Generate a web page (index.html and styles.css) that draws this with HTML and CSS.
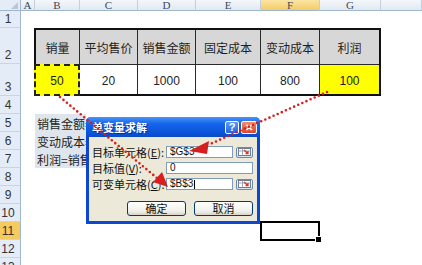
FILE: index.html
```html
<!DOCTYPE html>
<html lang="zh">
<head>
    <meta charset="UTF-8">
    <title>单变量求解</title>
    <link rel="stylesheet" href="styles.css">
</head>
<body>
    <div class="sheet">
        <div class="corner"><span class="tri"></span></div>
        <div class="col-head">A</div>
        <div class="col-head">B</div>
        <div class="col-head">C</div>
        <div class="col-head">D</div>
        <div class="col-head">E</div>
        <div class="col-head active">F</div>
        <div class="col-head">G</div>
        <div class="col-head"></div>

        <div class="row-head">1</div>
        <div class="row-head">2</div>
        <div class="row-head">3</div>
        <div class="row-head">4</div>
        <div class="row-head">5</div>
        <div class="row-head">6</div>
        <div class="row-head">7</div>
        <div class="row-head">8</div>
        <div class="row-head">9</div>
        <div class="row-head">10</div>
        <div class="row-head active">11</div>
        <div class="row-head">12</div>
        <div class="row-head">13</div>

        <div class="data">
            <div class="th">销量</div>
            <div class="th">平均售价</div>
            <div class="th">销售金额</div>
            <div class="th">固定成本</div>
            <div class="th">变动成本</div>
            <div class="th last">利润</div>
            <div class="td yellow ants">50</div>
            <div class="td">20</div>
            <div class="td">1000</div>
            <div class="td">100</div>
            <div class="td">800</div>
            <div class="td yellow last">100</div>
        </div>

        <!-- the rest of these lines sits under the dialog -->
        <div class="note">
            <div class="note-line">销售金额=销量*平均售价</div>
            <div class="note-line">变动成本=销量*16</div>
            <div class="note-line">利润=销售金额-成本</div>
        </div>

        <div class="picked"></div>
    </div>

    <div class="dialog">
        <div class="dlg-title">
            <span class="dlg-name">单变量求解</span>
            <span class="tb help">?</span>
            <span class="tb close">✕</span>
        </div>
        <div class="dlg-body">
            <div class="field">
                <label>目标单元格(<u>E</u>):</label>
                <span class="input short">$G$3</span>
                <span class="ref">
                    <svg width="13" height="8" viewBox="0 0 13 8">
                        <rect x="0.5" y="0.5" width="12" height="7" fill="#fff" stroke="#6b7d94"/>
                        <line x1="0.5" y1="3" x2="12.5" y2="3" stroke="#9aa8b8"/>
                        <line x1="4.5" y1="0.5" x2="4.5" y2="7.5" stroke="#9aa8b8"/>
                        <path d="M6 2 L10 5.5 M10 3 L10 5.5 L7.5 5.5" stroke="#d23a2a" stroke-width="1.3" fill="none"/>
                    </svg>
                </span>
            </div>
            <div class="field">
                <label>目标值(<u>V</u>):</label>
                <span class="input long">0</span>
            </div>
            <div class="field">
                <label>可变单元格(<u>C</u>):</label>
                <span class="input short">$B$3<span class="caret"></span></span>
                <span class="ref">
                    <svg width="13" height="8" viewBox="0 0 13 8">
                        <rect x="0.5" y="0.5" width="12" height="7" fill="#fff" stroke="#6b7d94"/>
                        <line x1="0.5" y1="3" x2="12.5" y2="3" stroke="#9aa8b8"/>
                        <line x1="4.5" y1="0.5" x2="4.5" y2="7.5" stroke="#9aa8b8"/>
                        <path d="M6 2 L10 5.5 M10 3 L10 5.5 L7.5 5.5" stroke="#d23a2a" stroke-width="1.3" fill="none"/>
                    </svg>
                </span>
            </div>
            <div class="actions">
                <button>确定</button>
                <button>取消</button>
            </div>
        </div>
    </div>

    <!-- red dotted pointers drawn over the sheet and dialog -->
    <svg class="pointers" width="422" height="265" viewBox="0 0 422 265">
        <line x1="60" y1="97" x2="157" y2="178" class="dots"/>
        <polygon points="168,187 153,182 162,172" fill="#d61f1f"/>
        <line x1="327" y1="92" x2="208" y2="145" class="dots"/>
        <polygon points="189,151 209,141 207,154" fill="#d61f1f"/>
    </svg>
</body>
</html>
```

FILE: styles.css
```css
body {
    margin: 0;
    width: 422px;
    height: 265px;
    overflow: hidden;
    position: relative;
    background: #fff;
    font-family: "Liberation Sans", "Noto Sans CJK SC", sans-serif;
    color: #222;
}
.sheet {
    display: grid;
    grid-template-columns: 21px 14px 45px 58px 58px 65px 59px 61px 1fr;
    grid-template-rows: 11px 17px 36px 32px repeat(10, 18px);
}
.corner {
    background: #e4ecf7;
    border-right: 1px solid #9eb6ce;
    border-bottom: 1px solid #9eb6ce;
    position: relative;
}
.tri {
    position: absolute;
    right: 2px;
    bottom: 1px;
    border-left: 7px solid transparent;
    border-bottom: 7px solid #b8c6d6;
}
.col-head {
    background: linear-gradient(#f4f7fb, #e1e8f1);
    border-right: 1px solid #c3cfdc;
    border-bottom: 1px solid #9eb6ce;
    font-family: "Liberation Serif", serif;
    font-size: 11px;
    line-height: 10px;
    color: #3b4a5c;
    text-align: center;
}
.col-head.active {
    background: linear-gradient(#fbe5a3, #f4cc66);
}
.row-head {
    grid-column: 1;
    background: #e4ecf7;
    border-right: 1px solid #9eb6ce;
    border-bottom: 1px solid #c9d5e2;
    display: flex;
    align-items: flex-end;
    justify-content: center;
    padding-right: 4px;
    font-size: 12px;
    line-height: 15px;
    color: #333;
}
.row-head.active {
    background: #f5ca5e;
}
.data {
    grid-column: 3 / 9;
    grid-row: 3 / 5;
    display: grid;
    grid-template-columns: 44px 58px 58px 65px 59px 1fr;
    grid-template-rows: 35px 1fr;
    border: 2px solid #111;
    margin-left: -1px;
}
.th, .td {
    display: flex;
    align-items: center;
    justify-content: center;
    border-right: 1px solid #2a2a2a;
    font-size: 12px;
}
.th {
    background: #d7d7d7;
    border-bottom: 1px solid #2a2a2a;
    font-family: "Noto Sans CJK SC", sans-serif;
    color: #1e1e1e;
}
.td {
    background: #fff;
    padding-top: 2px;
}
.last {
    border-right: none;
}
.yellow {
    background: #ffff00;
}
.ants {
    border: 2px dashed #222;
    margin: -1px 0 -2px -2px;
}
.note {
    grid-column: 3 / 5;
    grid-row: 6 / 9;
    margin-right: 52px;
    background: #dfe5ec;
    overflow: hidden;
}
.note-line {
    height: 18px;
    padding-left: 2px;
    font-family: "Noto Sans CJK SC", sans-serif;
    font-size: 12px;
    line-height: 20px;
    white-space: nowrap;
    color: #1e1e1e;
}
.picked {
    grid-column: 7;
    grid-row: 12;
    border: 2px solid #000;
    margin: -1px 0 -1px -1px;
    position: relative;
}
.picked::after {
    content: "";
    position: absolute;
    right: -4px;
    bottom: -4px;
    width: 5px;
    height: 5px;
    background: #000;
    border: 1px solid #fff;
}
.dialog {
    position: absolute;
    left: 86px;
    top: 117px;
    width: 174px;
    height: 107px;
    box-sizing: border-box;
    background: #ece9d8;
    border: 3px solid #0b47d1;
    border-top: none;
    border-radius: 5px 5px 0 0;
    font-family: "Noto Sans CJK SC", sans-serif;
    font-size: 11px;
}
.dlg-title {
    height: 20px;
    margin: 0 -3px;
    padding: 0 3px 0 6px;
    display: flex;
    align-items: center;
    gap: 2px;
    background: linear-gradient(#4a92fa, #1464ea 35%, #0b52d8 80%, #0a4bc9);
    border-radius: 5px 5px 0 0;
}
.dlg-name {
    flex: 1;
    color: #fff;
    font-weight: bold;
    font-size: 11px;
    text-shadow: 1px 1px 0 #0a2f8c;
}
.tb {
    width: 14px;
    height: 13px;
    box-sizing: border-box;
    border: 1px solid #fff;
    border-radius: 2px;
    display: flex;
    align-items: center;
    justify-content: center;
    color: #fff;
    font-family: "Liberation Sans", sans-serif;
    font-weight: bold;
    font-size: 11px;
}
.help {
    background: linear-gradient(#5c9cf8, #2462e4);
}
.close {
    width: 16px;
    background: linear-gradient(#ee8d6a, #d9482a);
    font-size: 10px;
}
.dlg-body {
    padding: 9px 4px 0 3px;
}
.field {
    display: flex;
    align-items: center;
    height: 12px;
    margin-bottom: 4px;
}
.field label {
    width: 74px;
    color: #111;
    white-space: nowrap;
}
.input {
    height: 12px;
    box-sizing: border-box;
    background: #fff;
    border: 1px solid #7f9db9;
    padding-left: 3px;
    font-family: "Liberation Sans", sans-serif;
    font-size: 10px;
    line-height: 10px;
    color: #111;
    display: flex;
    align-items: center;
}
.short {
    width: 67px;
}
.long {
    width: 87px;
}
.caret {
    width: 1px;
    height: 9px;
    margin-left: 1px;
    background: #000;
}
.ref {
    width: 17px;
    height: 11px;
    margin-left: 3px;
    box-sizing: border-box;
    border: 1px solid #6f88a8;
    border-radius: 2px;
    background: linear-gradient(#ffffff, #dce2ea);
    display: flex;
    align-items: center;
    justify-content: center;
}
.actions {
    display: flex;
    justify-content: flex-end;
    gap: 8px;
    margin-top: 11px;
}
.actions button {
    width: 59px;
    height: 15px;
    padding: 0;
    border: 1px solid #003c74;
    border-radius: 3px;
    background: linear-gradient(#ffffff, #f0f0ea 70%, #d8d4c8);
    font-family: "Noto Sans CJK SC", sans-serif;
    font-size: 11px;
    line-height: 13px;
    color: #111;
}
.pointers {
    position: absolute;
    left: 0;
    top: 0;
    pointer-events: none;
}
.dots {
    stroke: #d61f1f;
    stroke-width: 2.6;
    stroke-linecap: round;
    stroke-dasharray: 0 4.5;
}
```
